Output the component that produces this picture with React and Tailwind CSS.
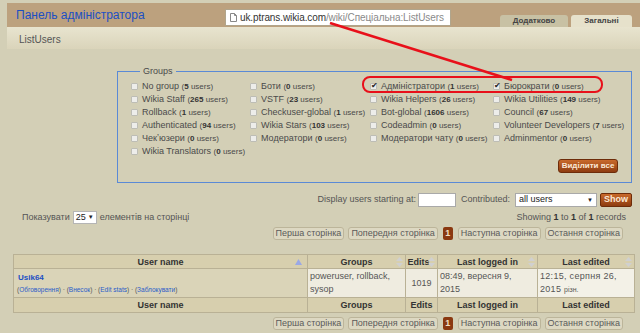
import React from 'react';

const groups = [
    ['No group', 5], ['Боти', 0], ['Адміністратори', 1, true], ['Бюрократи', 0, true],
    ['Wikia Staff', 265], ['VSTF', 23], ['Wikia Helpers', 26], ['Wikia Utilities', 149],
    ['Rollback', 1], ['Checkuser-global', 1], ['Bot-global', 1606], ['Council', 67],
    ['Authenticated', 94], ['Wikia Stars', 103], ['Codeadmin', 0], ['Volunteer Developers', 7],
    ['Чекʼюзери', 0], ['Модератори', 0], ['Модератори чату', 0], ['Adminmentor', 0],
    ['Wikia Translators', 0],
];

function Checkbox({ checked }) {
    return (
        <span className="relative flex h-[7px] w-[7px] shrink-0 items-center justify-center rounded-[1px] border border-[#bdbdb5] bg-[#ededea]">
            {checked && <span className="absolute -top-[2px] left-[0px] text-[8px] leading-none text-[#222]">✔</span>}
        </span>
    );
}

function SortIcon({ active }) {
    if (active) {
        return (
            <svg width="7" height="6" viewBox="0 0 7 6" className="absolute right-[5px] top-[4px]">
                <path d="M3.5 0 L7 6 L0 6 Z" fill="#9aa8e6" />
            </svg>
        );
    }
    return (
        <svg width="7" height="10" viewBox="0 0 7 10" className="absolute right-[2px] top-[2px]">
            <path d="M3.5 0 L7 4 L0 4 Z" fill="#d0d0d0" />
            <path d="M0 6 L7 6 L3.5 10 Z" fill="#d0d0d0" />
        </svg>
    );
}

function Pager() {
    const btn = "flex h-[13px] items-center rounded-[3px] border border-[#bcb59a] bg-[#ddd8c2] px-[2px] text-[9px] text-[#5a5a5a]";
    return (
        <div className="flex justify-end gap-[4px] pr-[17px]">
            <span className={btn}>Перша сторінка</span>
            <span className={btn}>Попередня сторінка</span>
            <span className="mx-[1px] flex h-[13px] w-[10px] items-center justify-center rounded-[2px] bg-[#8a3810] text-[9px] font-bold text-[#f4e0c8]">1</span>
            <span className={btn}>Наступна сторінка</span>
            <span className={btn}>Остання сторінка</span>
        </div>
    );
}

export default function App() {
    const th = "relative border border-[#b9b195] bg-[#d7cfae] text-center text-[9px] font-bold text-[#333] leading-[12px]";
    const td = "border border-[#b9b195] bg-[#efece0] px-[2px] text-[9px] leading-[13px] text-[#555] align-middle";

    return (
        <div className="relative h-[333px] w-[640px] overflow-hidden bg-[#d3cfb6] font-['Liberation_Sans',Arial,sans-serif]">
            {/* header */}
            <div className="ml-[7px] mt-[3px]">
                <div className="flex h-[24px] items-stretch justify-between bg-[#bca17e]">
                    <div className="pl-[9px] pt-[5px] text-[12px] leading-[15px] text-[#1a4fc4]">Панель адміністратора</div>
                    <div className="flex items-end gap-[3px]">
                        <div className="flex h-[12px] w-[68px] items-center justify-center rounded-t-[3px] bg-[#c8c1a4] text-[8px] font-bold text-[#444]">Додатково</div>
                        <div className="flex h-[12px] w-[61px] items-center justify-center rounded-t-[3px] bg-[#e6e1cb] text-[8px] font-bold text-[#444]">Загальні</div>
                        <div className="w-[5px]"></div>
                    </div>
                </div>
                <div className="flex h-[22px] items-center bg-gradient-to-b from-[#e8e4cf] to-[#dad4ba] pl-[12px] pt-[2px] text-[10px] text-[#555]">ListUsers</div>
            </div>

            {/* groups */}
            <fieldset className="ml-[117px] mr-[8px] mt-[16px] min-w-0 border border-[#5a8ad6] pb-[9px] pl-[13px] pr-[13px] pt-[3px]">
                <legend className="ml-[9px] px-[3px] text-[9px] leading-[12px] text-[#4a4a4a]">Groups</legend>
                <div className="grid grid-cols-[119px_120px_123px_1fr]">
                    {groups.map(([name, n, checked]) => (
                        <div key={name} className="flex h-[13px] items-center gap-[4px] whitespace-nowrap">
                            <Checkbox checked={checked} />
                            <span className="text-[9px] text-[#4a4a4a]">{name} <span className="text-[8px]">(<b className="text-[#333]">{n}</b> users)</span></span>
                        </div>
                    ))}
                </div>
                <div className="mt-[1px] flex justify-end">
                    <span className="flex h-[14px] w-[60px] items-center justify-center whitespace-nowrap rounded-[3px] border border-[#6d2c0a] bg-gradient-to-b from-[#c96a2c] to-[#8e3c10] text-[8px] font-bold text-[#fbe8d6]">Виділити все</span>
                </div>
            </fieldset>

            {/* filters */}
            <div className="mr-[8px] mt-[10px] flex h-[14px] items-center justify-end text-[9px] text-[#555]">
                <span>Display users starting at:</span>
                <span className="ml-[2px] h-[14px] w-[38px] border border-[#a9a9a9] bg-white"></span>
                <span className="ml-[5px]">Contributed:</span>
                <span className="ml-[5px] flex h-[14px] w-[82px] items-center justify-between border border-[#a9a9a9] bg-white px-[3px] text-[9px] text-[#222]">
                    all users<span className="text-[6px]">▼</span>
                </span>
                <span className="ml-[3px] flex h-[14px] w-[32px] items-center justify-center rounded-[2px] border border-[#6d2c0a] bg-gradient-to-b from-[#c96a2c] to-[#8e3c10] text-[9px] font-bold text-[#fbe8d6]">Show</span>
            </div>

            <div className="mt-[4px] flex h-[13px] items-center justify-between pl-[22px] pr-[14px] text-[9px] text-[#555]">
                <div className="flex items-center">
                    Показувати
                    <span className="mx-[3px] flex h-[13px] w-[24px] items-center justify-between border border-[#b5b5b5] bg-white px-[2px] text-[9px] text-[#222]">
                        25<span className="text-[6px]">▼</span>
                    </span>
                    елементів на сторінці
                </div>
                <div>Showing <b className="text-[#333]">1</b> to <b className="text-[#333]">1</b> of <b className="text-[#333]">1</b> records</div>
            </div>

            <div className="mt-[3px]"><Pager /></div>

            {/* table */}
            <table className="ml-[13px] mt-[14px] w-[621px] table-fixed border-collapse">
                <colgroup>
                    <col className="w-[294px]" />
                    <col className="w-[98px]" />
                    <col className="w-[32px]" />
                    <col className="w-[100px]" />
                    <col className="w-[97px]" />
                </colgroup>
                <thead>
                    <tr className="h-[14px]">
                        <th className={th}>User name<SortIcon active /></th>
                        <th className={th}>Groups<SortIcon /></th>
                        <th className={th + " pr-[6px]"}>Edits<SortIcon /></th>
                        <th className={th}>Last logged in<SortIcon /></th>
                        <th className={th}>Last edited<SortIcon /></th>
                    </tr>
                </thead>
                <tbody>
                    <tr className="h-[29px]">
                        <td className="border border-[#b9b195] bg-[#dad4b8] px-[3px] align-middle">
                            <div className="pl-[1px] text-[8px] font-bold leading-[13px] text-[#1a4fc4]">Usik64</div>
                            <div className="text-[6.5px] leading-[12px] text-[#555]">
                                (<span className="text-[#2a5cc8]">Обговорення</span>) · (<span className="text-[#2a5cc8]">Внесок</span>) · (<span className="text-[#2a5cc8]">Edit stats</span>) · (<span className="text-[#2a5cc8]">Заблокувати</span>)
                            </div>
                        </td>
                        <td className={td}>poweruser, rollback,<br />sysop</td>
                        <td className={td + " text-center"}>1019</td>
                        <td className={td}>08:49, вересня 9,<br />2015</td>
                        <td className={td + " bg-[#f3f1e7] text-[#2a5cc8] tracking-[0.3px]"}>12:15, серпня 26,<br />2015 <span className="text-[7px] tracking-normal">різн.</span></td>
                    </tr>
                    <tr className="h-[15px]">
                        <td className={th}>User name</td>
                        <td className={th}>Groups</td>
                        <td className={th}>Edits</td>
                        <td className={th}>Last logged in</td>
                        <td className={th}>Last edited</td>
                    </tr>
                </tbody>
            </table>

            <div className="mt-[4px]"><Pager /></div>

            {/* screenshot annotations */}
            <div className="absolute left-[225px] top-[9px] flex h-[17px] w-[226px] items-center gap-[3px] whitespace-nowrap border border-[#b0a58c] bg-white pl-[4px] text-[10px] tracking-[-0.1px]">
                <svg width="7" height="9" viewBox="0 0 7 9">
                    <path d="M0.5 0.5 H4.5 L6.5 2.5 V8.5 H0.5 Z M4.5 0.5 V2.5 H6.5" fill="none" stroke="#888" strokeWidth="1" />
                </svg>
                <span className="text-[#333]">uk.ptrans.wikia.com<span className="text-[#8a8a8a]">/wiki/Спеціальна:ListUsers</span></span>
            </div>
            <svg className="absolute left-0 top-0" width="640" height="333">
                <line x1="330" y1="23" x2="512" y2="80" stroke="#e8101a" strokeWidth="2.5" />
            </svg>
            <div className="absolute left-[362px] top-[76px] h-[17px] w-[241px] rounded-[8px] border-[2.5px] border-[#e8101a]"></div>
        </div>
    );
}
